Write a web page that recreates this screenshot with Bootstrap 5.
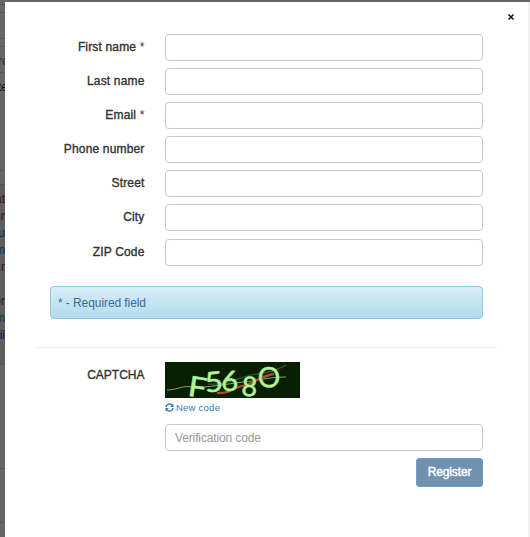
<!DOCTYPE html>
<html lang="en">
<head>
<meta charset="utf-8">
<meta name="viewport" content="width=device-width, initial-scale=1">
<title>Register</title>
<link href="https://cdn.jsdelivr.net/npm/bootstrap@5.3.0/dist/css/bootstrap.min.css" rel="stylesheet">
<style>
body{font:12px/17px "Liberation Sans",Arial,sans-serif;color:#333;background:#666;height:537px}
.backdrop-strip{width:5px;flex:none;background:#666;color:#111}
.strip-block{border-bottom:1px solid #565656;flex:none}
.strip-block.copy{background:#5e5e5e}
.strip-text{padding-top:6px}
.strip-line{display:flex;justify-content:flex-end;width:5px;height:17px;white-space:nowrap;overflow:hidden}
.strip-line.from-left{justify-content:flex-start}
.strip-line.from-left span{margin-left:-2px}
.c-blue{color:#0a3250}.c-red{color:#40120c}.c-navy{color:#15104a}
.dialog-pane{background:#fff;margin-top:2px;width:523px}
.dialog-edge{width:2px;margin-top:2px;background:#f1f1f1}
.close-row{height:32px;padding:9px 14px 0 0}
.close-x{border:0;background:none;padding:0;width:6px;height:12px;line-height:0}
.field-row{height:27px;margin-bottom:7.1px}
.field-label{width:139.5px;margin-right:20.5px;text-align:right;letter-spacing:.16px;line-height:27px;-webkit-text-stroke:.36px #333}
.field-label span{-webkit-text-stroke:0}
.form-control.entry{width:318px;height:27px;border:1px solid #c8c8c8;border-radius:4px;padding:1px 9px 0;font-size:12px;line-height:25px}
.form-control.entry::placeholder{color:#999;opacity:1;letter-spacing:-.13px}
.note{margin:20px 0 0 45px;width:433px;height:33px;padding:0 7px;line-height:33px;border:1px solid #8cc9e6;border-radius:4px;color:#31708f;background:linear-gradient(#d9edf7,#b3dcee);letter-spacing:-.08px}
.divider{margin:28px 0 0 32px;width:460px;height:1px;background:#ececec}
.captcha-row{margin-top:14px}
.captcha-row .field-label{line-height:26px;letter-spacing:0}
.code-link{color:#337ab7;font-size:9.5px;line-height:12px;margin:4px 0 10px;text-decoration:none;gap:2px;letter-spacing:.24px}
.btn.submit{width:67px;height:29px;margin-top:7px;padding:0;font-size:12px;font-weight:400;line-height:26px;letter-spacing:-.12px;color:#fff;-webkit-text-stroke:.42px #fff;background:#7092af;border:1px solid #6ca0c6;border-radius:3px}
</style>
<script src="https://cdn.jsdelivr.net/npm/bootstrap@5.3.0/dist/js/bootstrap.bundle.min.js"></script>
</head>
<body class="d-flex overflow-hidden m-0">
<aside class="backdrop-strip d-flex flex-column overflow-hidden" aria-hidden="true">
  <div class="strip-block" style="height:5px"></div>
  <div class="strip-block" style="height:8px"></div>
  <div class="strip-block" style="height:26px"></div>
  <div class="strip-block" style="height:8px"></div>
  <div class="strip-block strip-text" style="height:26px"><div class="strip-line from-left c-blue"><span>ro</span></div></div>
  <div class="strip-block strip-text" style="height:98px"><div class="strip-line from-left"><span>te</span></div></div>
  <div class="strip-block" style="height:14px"></div>
  <div class="strip-block copy strip-text" style="height:180px">
    <div class="strip-line c-red">at</div><div class="strip-line c-red">gr</div><div class="strip-line c-blue">u</div><div class="strip-line c-blue">m</div><div class="strip-line c-red">.r</div><div class="strip-line"></div><div class="strip-line c-red">or</div><div class="strip-line c-blue">m</div><div class="strip-line c-navy">il</div>
  </div>
  <div class="strip-block" style="height:104px"></div>
  <div class="strip-block" style="height:54px"></div>
</aside>
<main class="dialog-pane d-flex flex-column flex-shrink-0">
  <div class="close-row d-flex justify-content-end flex-shrink-0">
    <button class="close-x" type="button" aria-label="Close"><svg width="6" height="6" viewBox="0 0 6 6"><path d="M.5.5 5.5 5.5M5.5.5.5 5.5" stroke="#111" stroke-width="1.5"/></svg></button>
  </div>
  <form>
    <div class="field-row d-flex"><label class="field-label" for="first">First name <span>*</span></label><input class="form-control entry" id="first"></div>
    <div class="field-row d-flex"><label class="field-label" for="last">Last name</label><input class="form-control entry" id="last"></div>
    <div class="field-row d-flex"><label class="field-label" for="email">Email <span>*</span></label><input class="form-control entry" id="email"></div>
    <div class="field-row d-flex"><label class="field-label" for="phone">Phone number</label><input class="form-control entry" id="phone"></div>
    <div class="field-row d-flex"><label class="field-label" for="street">Street</label><input class="form-control entry" id="street"></div>
    <div class="field-row d-flex"><label class="field-label" for="city">City</label><input class="form-control entry" id="city"></div>
    <div class="field-row d-flex mb-0"><label class="field-label" for="zip">ZIP Code</label><input class="form-control entry" id="zip"></div>
    <div class="note">* - Required field</div>
    <div class="divider"></div>
    <div class="captcha-row d-flex">
      <label class="field-label" for="code">CAPTCHA</label>
      <div class="d-flex flex-column align-items-start">
        <svg width="135" height="36" viewBox="0 0 135 36">
          <rect width="135" height="36" fill="#081f03"/>
          <path d="M43 22C60 24 77 14 91 12S108 10 121 3" fill="none" stroke="#465344" stroke-width="1.2"/>
          <path d="M2 28C12 28 18 23 27 25 43 26 61 22 78 20 92 19 102 15 121 15" fill="none" stroke="#76aa59" stroke-width="1"/>
          <path d="M52 31C66 32 67 26 77 24 91 22 92 14 109 12" fill="none" stroke="#b8472a" stroke-width="2.2"/>
          <g font-family="Lato, sans-serif" fill="#b1f397" stroke="#b1f397" stroke-width=".5">
            <text transform="translate(22 33.5) rotate(9) scale(1.15 1)" font-size="28">F</text>
            <text transform="translate(40.5 30.5) rotate(-5) scale(1.12 1)" font-size="28">5</text>
            <text transform="translate(56 28.5) rotate(2) scale(1.05 1)" font-size="28">6</text>
            <text transform="translate(76 33.5) rotate(4)" font-size="27">8</text>
            <text transform="translate(93.5 26) rotate(-4)" font-size="28">O</text>
          </g>
          <path d="M97 17Q102 13 109 12" fill="none" stroke="#b8472a" stroke-width="2"/>
        </svg>
        <a class="code-link d-flex align-items-center" href="#">
          <svg width="9" height="9" viewBox="0 0 18 18"><path d="M2 8A7 7 0 0 1 14 4M16 10A7 7 0 0 1 4 14" fill="none" stroke="#337ab7" stroke-width="3"/><path d="M17 1v7h-7zM1 17v-7h7z" fill="#337ab7"/></svg>
          <span>New code</span>
        </a>
        <input class="form-control entry" id="code" placeholder="Verification code">
        <button class="btn submit align-self-end" type="button">Register</button>
      </div>
    </div>
  </form>
</main>
<div class="dialog-edge flex-shrink-0"></div>
</body>
</html>
